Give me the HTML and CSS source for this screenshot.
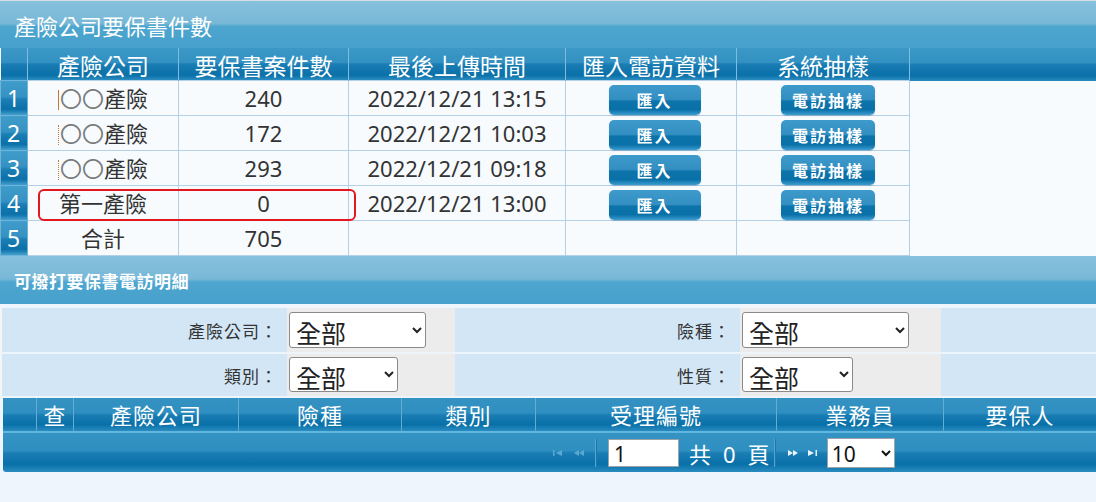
FILE: index.html
```html
<!DOCTYPE html>
<html lang="zh-Hant">
  <head>
    <meta charset="UTF-8" />
    <title>產險公司要保書件數</title>
    <link rel="stylesheet" href="styles.css">
  </head>
  <body>
    <div class="panel">
      <div class="panel-title">產險公司要保書件數</div>
      <div class="summary-box">
        <table class="summary">
          <colgroup>
            <col class="c-no"><col class="c-co"><col class="c-cnt"><col class="c-time"><col class="c-imp"><col class="c-samp"><col>
          </colgroup>
          <thead>
            <tr>
              <th class="no"></th>
              <th>產險公司</th>
              <th>要保書案件數</th>
              <th>最後上傳時間</th>
              <th>匯入電訪資料</th>
              <th>系統抽樣</th>
              <th class="blank"></th>
            </tr>
          </thead>
          <tbody>
            <tr>
              <td class="no">1</td>
              <td><span class="cut"></span><span class="mask">〇〇</span>產險</td>
              <td>240</td>
              <td>2022/12/21 13:15</td>
              <td><button class="btn">匯入</button></td>
              <td><button class="btn">電訪抽樣</button></td>
              <td class="blank"></td>
            </tr>
            <tr>
              <td class="no">2</td>
              <td><span class="cut dot"></span><span class="mask">〇〇</span>產險</td>
              <td>172</td>
              <td>2022/12/21 10:03</td>
              <td><button class="btn">匯入</button></td>
              <td><button class="btn">電訪抽樣</button></td>
              <td class="blank"></td>
            </tr>
            <tr>
              <td class="no">3</td>
              <td><span class="cut dot"></span><span class="mask">〇〇</span>產險</td>
              <td>293</td>
              <td>2022/12/21 09:18</td>
              <td><button class="btn">匯入</button></td>
              <td><button class="btn">電訪抽樣</button></td>
              <td class="blank"></td>
            </tr>
            <tr>
              <td class="no">4</td>
              <td>第一產險</td>
              <td>0</td>
              <td>2022/12/21 13:00</td>
              <td><button class="btn">匯入</button></td>
              <td><button class="btn">電訪抽樣</button></td>
              <td class="blank"></td>
            </tr>
            <tr>
              <td class="no">5</td>
              <td>合計</td>
              <td>705</td>
              <td></td>
              <td></td>
              <td></td>
              <td class="blank"></td>
            </tr>
          </tbody>
        </table>
        <!-- 標示第一產險 -->
        <div class="mark"></div>
      </div>
    </div>

    <div class="panel">
      <div class="panel-title sub">可撥打要保書電訪明細</div>
      <table class="filter">
        <colgroup>
          <col class="f-l1"><col class="f-s1"><col class="f-l2"><col class="f-s2"><col>
        </colgroup>
        <tr>
          <th>產險公司：</th>
          <td><select class="sel w-co"><option>全部</option></select></td>
          <th>險種：</th>
          <td><select class="sel w-kind"><option>全部</option></select></td>
          <th></th>
        </tr>
        <tr>
          <th>類別：</th>
          <td><select class="sel w-type"><option>全部</option></select></td>
          <th>性質：</th>
          <td><select class="sel w-nat"><option>全部</option></select></td>
          <th></th>
        </tr>
      </table>

      <div class="grid">
        <div class="grid-head">
          <span></span>
          <span>查</span>
          <span>產險公司</span>
          <span>險種</span>
          <span>類別</span>
          <span>受理編號</span>
          <span>業務員</span>
          <span>要保人</span>
        </div>
        <div class="pager">
          <span class="pg-icon off">
            <svg width="10" height="8" viewBox="0 0 10 8"><rect x="0" y="1" width="1.5" height="6" fill="currentColor"/><path d="M9 1 L3 4 L9 7 Z" fill="currentColor"/></svg>
          </span>
          <span class="pg-icon off">
            <svg width="12" height="8" viewBox="0 0 12 8"><path d="M6 1 L1 4 L6 7 Z M11 1 L6 4 L11 7 Z" fill="currentColor"/></svg>
          </span>
          <span class="pg-sep"></span>
          <input class="pg-input" type="text" value="1">
          <span class="pg-text">共<b>0</b>頁</span>
          <span class="pg-sep"></span>
          <span class="pg-icon">
            <svg width="12" height="8" viewBox="0 0 12 8"><path d="M1 1 L6 4 L1 7 Z M6 1 L11 4 L6 7 Z" fill="currentColor"/></svg>
          </span>
          <span class="pg-icon">
            <svg width="10" height="8" viewBox="0 0 10 8"><path d="M1 1 L7 4 L1 7 Z" fill="currentColor"/><rect x="8.5" y="1" width="1.5" height="6" fill="currentColor"/></svg>
          </span>
          <select class="pg-size"><option>10</option></select>
        </div>
      </div>
    </div>
  </body>
</html>
```

FILE: styles.css
```css
body {
  margin: 0;
  background-color: #eef5fc;
  font-family: "Noto Sans", "Noto Sans CJK TC", sans-serif;
  color: #333;
}
.panel {
  width: 1096px;
}
.panel-title {
  height: 47px;
  border-top: 1px solid #d6dde3;
  padding-left: 14px;
  line-height: 50px;
  font-size: 22px;
  color: #fff;
  background: linear-gradient(to bottom, #86c1de 0%, #78b8d7 48%, #4ea6cf 54%, #45a0cb 100%);
}
.panel-title.sub {
  height: 48px;
  border-top: none;
  line-height: 52px;
  font-size: 17px;
  font-weight: bold;
  letter-spacing: 0.5px;
}
/* 上方統計表 */
.summary-box {
  position: relative;
}
.summary {
  width: 100%;
  table-layout: fixed;
  border-collapse: collapse;
  background-color: #f7fbfe;
}
.c-no { width: 27px; }
.c-co { width: 151px; }
.c-cnt { width: 170px; }
.c-time { width: 217px; }
.c-imp { width: 171px; }
.c-samp { width: 173px; }
.summary th {
  height: 28px;
  padding: 4px 0 0;
  font-size: 23px;
  line-height: 28px;
  font-weight: normal;
  color: #fff;
  border-left: 1px solid #7fbde0;
  border-right: 1px solid #7fbde0;
  background: linear-gradient(to bottom, #3b98c6 0%, #3291c2 45%, #1a7db3 50%, #0a70a8 85%, #2a8cc0 100%);
}
.summary th.no {
  border-left: none;
}
.summary th.blank {
  border: none;
}
.summary td {
  height: 34px;
  padding: 0;
  font-size: 22px;
  line-height: 30px;
  text-align: center;
  border: 1px solid #b3d0e6;
}
.summary td.no {
  color: #fff;
  font-size: 23px;
  text-align: left;
  padding-left: 6px;
  border-color: #6fb3d9;
  background: linear-gradient(to bottom, #3f9bc9 0%, #3492c3 45%, #1b7eb4 52%, #0a70a8 82%, #4aa5d2 100%);
}
.summary td.blank {
  border: none;
  border-left: 1px solid #b3d0e6;
}
.mask {
  color: #7a7a7a;
}
.cut {
  display: inline-block;
  width: 0;
  height: 20px;
  margin-right: 1px;
  vertical-align: -3px;
  border-left: 1px solid #c47a2c;
}
.cut.dot {
  border-left-style: dotted;
}
.btn {
  height: 30px;
  padding: 0;
  vertical-align: middle;
  border: none;
  border-radius: 5px;
  font-family: "Noto Sans CJK TC", sans-serif;
  font-size: 16px;
  font-weight: bold;
  letter-spacing: 2px;
  color: #fff;
  box-shadow: 0 1px 1px rgba(0, 60, 100, 0.25);
  background: linear-gradient(to bottom, #3d9acb 0%, #338fc1 48%, #0c73ab 54%, #0a70a8 82%, #3b9dcf 100%);
}
.summary td:nth-child(5) .btn {
  width: 92px;
  margin-left: 7px;
}
.summary td:nth-child(6) .btn {
  width: 94px;
  margin-left: 10px;
}
.mark {
  position: absolute;
  left: 38px;
  top: 141px;
  width: 314px;
  height: 28px;
  border: 2px solid #e4161e;
  border-radius: 6px;
}
/* 查詢條件 */
.filter {
  width: 100%;
  margin-top: 4px;
  table-layout: fixed;
  border-collapse: collapse;
  border-left: 2px solid #f3f6f8;
}
.f-l1 { width: 286px; }
.f-s1 { width: 168px; }
.f-l2 { width: 285px; }
.f-s2 { width: 201px; }
.filter th {
  height: 44px;
  padding: 0 9px 0 0;
  text-align: right;
  font-size: 17px;
  font-weight: normal;
  letter-spacing: 1px;
  color: #333;
  background-color: #d2e6f6;
  border-bottom: 2px solid #edf4fa;
}
.filter td {
  padding: 0 0 0 2px;
  background-color: #ececec;
  border-bottom: 2px solid #edf4fa;
}
.filter tr:last-child th,
.filter tr:last-child td {
  height: 42px;
}
.sel {
  height: 36px;
  font-family: "Noto Sans CJK TC", sans-serif;
  font-size: 25px;
  color: #222;
  background-color: #fff;
  border: 1px solid #8a8a8a;
  border-radius: 3px;
  padding: 0 2px;
}
.w-co { width: 137px; }
.w-type { width: 109px; height: 35px; }
.w-kind { width: 167px; }
.w-nat { width: 111px; height: 35px; }
/* 明細表 */
.grid {
  margin: 0 0 0 3px;
  border-radius: 0 0 0 3px;
  overflow: hidden;
}
.grid-head {
  display: grid;
  grid-template-columns: 33px 37px 165px 163px 134px 241px 167px 1fr;
  height: 33px;
  border-bottom: 2px solid #5fb7e0;
  background: linear-gradient(to bottom, #3592c2 0%, #2e8fc0 45%, #1a7db3 52%, #0870a8 80%, #2a8cc0 100%);
}
.grid-head span {
  font-size: 22px;
  line-height: 35px;
  letter-spacing: 1px;
  text-align: center;
  color: #fff;
  border-left: 1px solid #62acd6;
}
.grid-head span:first-child {
  border-left: none;
}
.pager {
  display: flex;
  align-items: center;
  height: 39px;
  padding-left: 550px;
  background: linear-gradient(to bottom, #3493c3 0%, #2e8fc0 45%, #1a7db3 52%, #0870a8 80%, #2a8cc0 100%);
}
.pg-icon {
  display: flex;
  width: 12px;
  margin-right: 8px;
  color: #e9f4fb;
}
.pg-icon.off {
  color: #5ba9d2;
}
.pg-sep {
  width: 1px;
  height: 28px;
  margin: 0 11px 0 2px;
  background-color: #5aa5cf;
  border-right: 1px solid #1a78ae;
}
.pg-input {
  box-sizing: border-box;
  width: 71px;
  height: 28px;
  margin: 0 10px 0 0;
  padding: 2px 5px 0;
  border: 1px solid #9aa3aa;
  font-family: "Noto Sans", sans-serif;
  font-size: 21px;
  color: #111;
}
.pg-text {
  font-size: 22px;
  color: #fff;
  margin-right: 2px;
}
.pg-text b {
  font-weight: normal;
  margin: 0 12px;
}
.pg-size {
  width: 68px;
  height: 30px;
  margin-left: 0;
  font-family: "Noto Sans", sans-serif;
  font-size: 21px;
  color: #111;
  border: 1px solid #9aa3aa;
  border-radius: 0;
  background-color: #fff;
}
```
